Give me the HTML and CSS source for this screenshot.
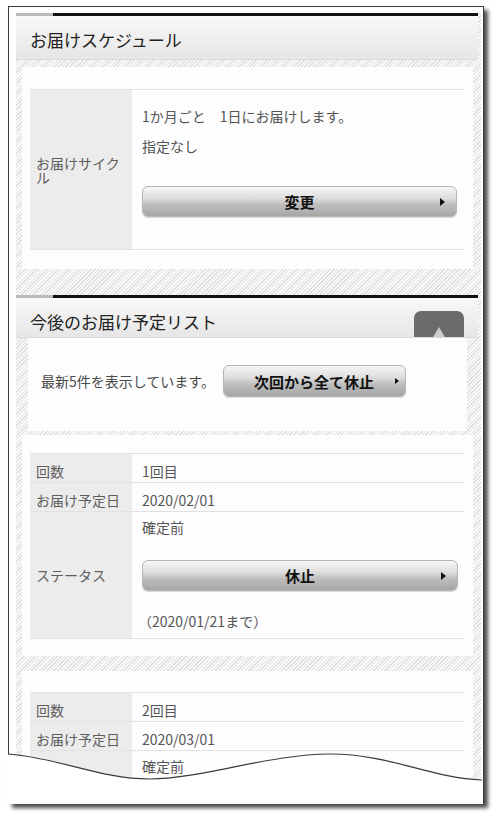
FILE: index.html
```html
<!DOCTYPE html>
<html lang="ja">
<head>
  <meta charset="UTF-8">
  <title>お届けスケジュール</title>
  <meta name="viewport" content="width=device-width, initial-scale=1.0">
  <link rel="stylesheet" href="styles.css">
</head>
<body>
  <div class="frame">
    <main class="page">
      <div class="column">

        <section class="block">
          <h2 class="block-head">お届けスケジュール</h2>
          <div class="card">
            <div class="rows">
              <div class="row">
                <div class="row-label row-label--wrap">お届けサイクル</div>
                <div class="row-value row-value--cycle">
                  <p>1か月ごと　1日にお届けします。</p>
                  <p class="line-gap">指定なし</p>
                  <button class="btn btn--cycle">変更</button>
                </div>
              </div>
            </div>
          </div>
        </section>

        <section class="block block--list">
          <h2 class="block-head block-head--list">
            今後のお届け予定リスト
            <span class="to-top"></span>
          </h2>

          <div class="notice">
            <span>最新5件を表示しています。</span>
            <button class="btn btn--inline">次回から全て休止</button>
          </div>

          <div class="card card--item">
            <div class="rows">
              <div class="row">
                <div class="row-label">回数</div>
                <div class="row-value">1回目</div>
              </div>
              <div class="row">
                <div class="row-label">お届け予定日</div>
                <div class="row-value">2020/02/01</div>
              </div>
              <div class="row">
                <div class="row-label row-label--mid">ステータス</div>
                <div class="row-value row-value--status">
                  <p>確定前</p>
                  <button class="btn btn--status">休止</button>
                  <p class="until">（2020/01/21まで）</p>
                </div>
              </div>
            </div>
          </div>

          <div class="card card--item card--next">
            <div class="rows">
              <div class="row">
                <div class="row-label">回数</div>
                <div class="row-value">2回目</div>
              </div>
              <div class="row">
                <div class="row-label">お届け予定日</div>
                <div class="row-value">2020/03/01</div>
              </div>
              <div class="row">
                <div class="row-label"></div>
                <div class="row-value row-value--status">
                  <p>確定前</p>
                </div>
              </div>
            </div>
          </div>
        </section>

      </div>
    </main>

    <!-- torn bottom edge -->
    <svg class="tear" width="474" height="56" viewBox="8 748 474 56">
      <path d="M8 754 C60 758 100 779 150 779 S270 754 330 754 S430 778 482 780 L482 804 L8 804 Z" fill="#fff"/>
      <path d="M8 754 C60 758 100 779 150 779 S270 754 330 754 S430 778 482 780" fill="none" stroke="#3a3a3a" stroke-width="1.2"/>
    </svg>
  </div>
</body>
</html>
```

FILE: styles.css
```css
:root {
  --ink: #222;
  --text: #555;
  --label: #5e5e5e;
  --line: #e2e2e2;
  --label-bg: #ececec;
  --card-bg: #fdfdfd;
}

html, body {
  margin: 0;
  padding: 0;
}

body {
  background: #fff;
  font-family: "Noto Sans CJK JP", "Noto Sans", sans-serif;
  color: var(--text);
  height: 819px;
  overflow: hidden;
}

.frame {
  position: relative;
  margin: 6px 0 0 8px;
  width: 474px;
  height: 797px;
  border: 1px solid #3a3a3a;
  border-bottom: 0;
  box-shadow: 4px 4px 4px rgba(0, 0, 0, 0.7);
  background: #fff;
}

.page {
  height: 797px;
  overflow: hidden;
  padding: 6px 2px 0 7px;
  box-sizing: border-box;
}

.column {
  min-height: 900px;
  background: repeating-linear-gradient(135deg, #dedede 0 1px, #f9f9f9 1px 2.6px);
}

.block--list {
  margin-top: 26px;
}

.block-head {
  position: relative;
  overflow: hidden;
  margin: 0 3px 0 0;
  padding: 15px 14px 7px;
  font-size: 17px;
  font-weight: normal;
  line-height: 24px;
  color: var(--ink);
  border-bottom: 1px solid #dadada;
  background:
    linear-gradient(to right, #bababa 37px, #111 37px) top / 100% 3px no-repeat,
    linear-gradient(#fafafa, #e6e6e6);
}

.block-head--list {
  padding-bottom: 3px;
}

.to-top {
  position: absolute;
  right: 14px;
  top: 16px;
  width: 50px;
  height: 36px;
  border-radius: 7px;
  background: #6b6b6b;
}

.to-top::after {
  content: "";
  position: absolute;
  left: 18px;
  top: 16px;
  border-left: 7px solid transparent;
  border-right: 7px solid transparent;
  border-bottom: 12px solid #cdcdcd;
}

.card {
  margin: 7px 8px 0 6px;
  padding: 22px 8px 19px;
  background: var(--card-bg);
}

.card--item {
  margin-top: 4px;
  padding: 18px 8px 17px;
}

.card--next {
  margin-top: 15px;
  padding-top: 21px;
}

.rows {
  border-top: 1px solid var(--line);
}

.row {
  display: grid;
  grid-template-columns: 102px 1fr;
  column-gap: 1px;
  border-bottom: 1px solid var(--line);
}

.row-label {
  background: var(--label-bg);
  padding: 7px 6px 1px;
  font-size: 14px;
  line-height: 20px;
  color: var(--label);
}

.row-label--mid,
.row-label--wrap {
  display: flex;
  align-items: center;
  padding-top: 0;
  padding-bottom: 0;
}

.row-label--wrap {
  line-height: 14px;
}

.row-value {
  padding: 7px 7px 1px 9px;
  font-size: 14px;
  line-height: 20px;
  color: var(--text);
}

.row-value p {
  margin: 0;
}

.row-value--cycle {
  padding: 16px 8px 32px 9px;
}

.line-gap {
  margin-top: 10px !important;
}

.row-value--status {
  padding: 5px 7px 7px 9px;
}

.until {
  margin-top: 20px !important;
  margin-left: -4px !important;
}

.btn {
  position: relative;
  display: block;
  width: 100%;
  height: 31px;
  padding: 0;
  border: 1px solid #b6b6b6;
  border-radius: 6px;
  background: linear-gradient(#f6f6f6 0%, #dedede 38%, #bdbdbd 62%, #a6a6a6 100%);
  box-shadow: 0 1px 1px rgba(0, 0, 0, 0.15);
  font-family: inherit;
  font-size: 15px;
  font-weight: bold;
  line-height: 29px;
  color: #111;
}

.btn::after {
  content: "";
  position: absolute;
  right: 11px;
  top: 50%;
  margin-top: -4px;
  border-left: 5px solid #111;
  border-top: 4px solid transparent;
  border-bottom: 4px solid transparent;
}

.btn--cycle {
  margin-top: 30px;
}

.btn--status {
  margin-top: 23px;
}

.notice {
  display: flex;
  align-items: center;
  gap: 8px;
  margin: 0 14px 0 12px;
  padding: 27px 13px 34px;
  background: var(--card-bg);
  font-size: 14px;
  color: #4a4a4a;
}

.btn--inline {
  width: auto;
  height: 32px;
  padding: 0 31px 0 30px;
}

.btn--inline::after {
  right: 6px;
  border-left-width: 4px;
  border-top-width: 3px;
  border-bottom-width: 3px;
  margin-top: -3px;
}

.tear {
  position: absolute;
  left: -1px;
  top: 741px;
  display: block;
}
```
